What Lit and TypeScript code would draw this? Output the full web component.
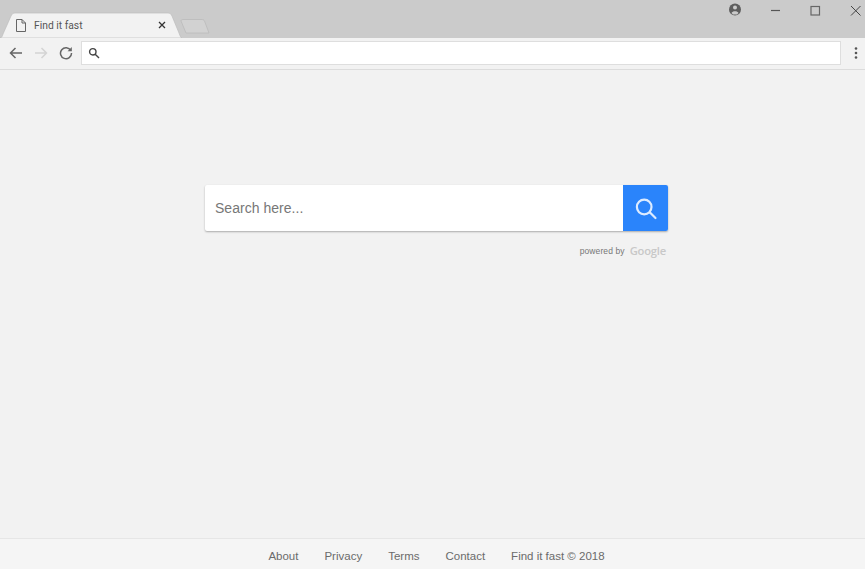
import { LitElement, html, css } from "lit";
import { customElement } from "lit/decorators.js";

@customElement("app-root")
export class AppRoot extends LitElement {
  static styles = css`
    :host { display: block; width: 865px; height: 569px; overflow: hidden; font-family: "Liberation Sans", Arial, sans-serif; background: #f2f2f2; }
    .page { display: flex; flex-direction: column; height: 569px; }
    .strip { height: 38px; background: #cbcbcb; display: flex; flex: none; position: relative; }
    .tab { position: relative; width: 182px; height: 38px; flex: none; display: flex; align-items: center; padding: 12px 0 0 16px; box-sizing: border-box; }
    .tabshape { position: absolute; left: 0; top: 0; }
    .doc { position: relative; flex: none; margin-right: 8px; }
    .title { position: relative; font: 10.3px Roboto, sans-serif; color: #555; width: 124px; flex: none; }
    .x { position: relative; flex: none; }
    .newtab { margin: 19px 0 0 -2px; flex: none; display: block; }
    .win { margin-left: auto; display: flex; align-items: flex-start; }
    .win svg { display: block; }
    .toolbar { flex: none; background: #f2f2f2; border-bottom: 1px solid #dcdcdc; display: flex; align-items: center; padding-bottom: 1px; box-sizing: border-box; height: 32px; }
    .nav { display: flex; align-items: center; gap: 11px; padding-left: 9px; width: 81px; box-sizing: border-box; flex: none; }
    .nav svg, .menu svg { display: block; }
    .url { width: 760px; height: 24px; background: #fff; border: 1px solid #dedede; box-sizing: border-box; display: flex; align-items: center; padding-left: 6px; flex: none; }
    .menu { flex: 1; display: flex; justify-content: center; padding-left: 6px; }
    main { flex: 1; padding: 115px 0 0 205px; background: #f2f2f2; }
    .search { width: 463px; height: 46px; display: flex; background: #fff; box-shadow: 0 1px 2px rgba(0,0,0,.3); border-radius: 2px; }
    .field { flex: 1; display: flex; align-items: center; padding-left: 10px; font-size: 14px; color: #777; letter-spacing: .03px; }
    .go { width: 45px; background: #2a84fb; display: flex; align-items: center; justify-content: center; border-radius: 0 2px 2px 0; }
    .pow { width: 461px; display: flex; justify-content: flex-end; align-items: center; gap: 5px; margin-top: 13px; height: 14px; }
    .pow .by { font-size: 8.5px; color: #777; letter-spacing: .1px; }
    .pow .g { font: 600 11.2px "Open Sans", sans-serif; color: #c8c8c8; letter-spacing: -.2px; margin-top: -1px; }
    footer { height: 31px; flex: none; background: #f5f5f5; border-top: 1px solid #e6e6e6; display: flex; justify-content: center; align-items: center; gap: 26px; font-size: 11.5px; color: #6b6b6b; padding: 4px 0 0 8px; box-sizing: border-box; }
  `;

  render() {
    return html`<div class="page">
      <div class="strip">
        <div class="tab">
          <svg class="tabshape" width="182" height="38" viewBox="0 0 182 38">
            <path d="M0 38 C1.500 38 2.500 36 3 34 L11 16 C12 14 13 13 15 13 L168 13 C170 13 171 14 172 16 L179 33 C180 36 181 38 182 38 Z" fill="#f2f2f2" stroke="#bdbdbd" stroke-width=".7"/>
          </svg>
          <svg class="doc" width="10" height="13" viewBox="0 0 10 13" fill="none" stroke="#666" stroke-width="1"><path d="M.5 .5H6L9.500 4V12.500H.5Z M6 .5V4H9.500"/></svg>
          <span class="title">Find it fast</span>
          <svg class="x" width="8" height="8" viewBox="0 0 8 8" stroke="#333" stroke-width="1.300"><path d="M1 1L7 7M7 1L1 7"/></svg>
        </div>
        <svg class="newtab" width="30" height="15" viewBox="0 0 30 15">
          <path d="M1 2 C1 1 2 .5 3 .5H22 C23 .5 24 1 24.500 2L29 14H6Z" fill="#d2d2d2" stroke="#bababa" stroke-width=".8"/>
        </svg>
        <div class="win">
          <svg width="160" height="24" viewBox="0 0 160 24">
            <circle cx="30" cy="9.500" r="6" fill="#5e5e5e"/>
            <circle cx="30" cy="7.500" r="2" fill="#cbcbcb"/>
            <path d="M26.500 13 C27.500 10.800 32.500 10.800 33.500 13 L32 14.500H28Z" fill="#cbcbcb"/>
            <path d="M66 10.500H75" stroke="#555" stroke-width="1.200"/>
            <rect x="106" y="6.500" width="8.500" height="8.500" fill="none" stroke="#666" stroke-width="1.200"/>
            <path d="M146 6L155.500 15.500M155.500 6L146 15.500" stroke="#444" stroke-width="1"/>
          </svg>
        </div>
      </div>
      <div class="toolbar">
        <div class="nav">
          <svg width="14" height="12" viewBox="0 0 14 12" fill="none" stroke="#666" stroke-width="1.500"><path d="M13 6H2M6.500 1L1.500 6L6.500 11"/></svg>
          <svg width="14" height="12" viewBox="0 0 14 12" fill="none" stroke="#d4d4d4" stroke-width="1.500"><path d="M1 6H12M7.500 1L12.500 6L7.500 11"/></svg>
          <svg width="14" height="14" viewBox="0 0 14 14" fill="none" stroke="#666" stroke-width="1.500"><path d="M11.800 4.500A5.500 5.500 0 1 0 12.500 7"/><path d="M12.800 1V5.200H8.600" fill="#666" stroke="none"/></svg>
        </div>
        <div class="url">
          <svg width="12" height="12" viewBox="0 0 12 12" fill="none" stroke="#444" stroke-width="1.400"><circle cx="4.800" cy="4.800" r="3.200"/><path d="M7.200 7.200L11 11"/></svg>
        </div>
        <div class="menu">
          <svg width="4" height="12" viewBox="0 0 4 12" fill="#555"><circle cx="2" cy="1.500" r="1.300"/><circle cx="2" cy="6" r="1.300"/><circle cx="2" cy="10.500" r="1.300"/></svg>
        </div>
      </div>
      <main>
        <div class="search">
          <div class="field">Search here...</div>
          <div class="go">
            <svg width="24" height="24" viewBox="0 0 24 24" fill="none" stroke="#dcebff" stroke-width="2.200"><circle cx="10.200" cy="11" r="7.300"/><path d="M16 16.500L21.500 22" stroke-linecap="round"/></svg>
          </div>
        </div>
        <div class="pow"><span class="by">powered by</span><span class="g">Google</span></div>
      </main>
      <footer>
        <span>About</span><span>Privacy</span><span>Terms</span><span>Contact</span><span>Find it fast © 2018</span>
      </footer>
    </div>`;
  }
}
